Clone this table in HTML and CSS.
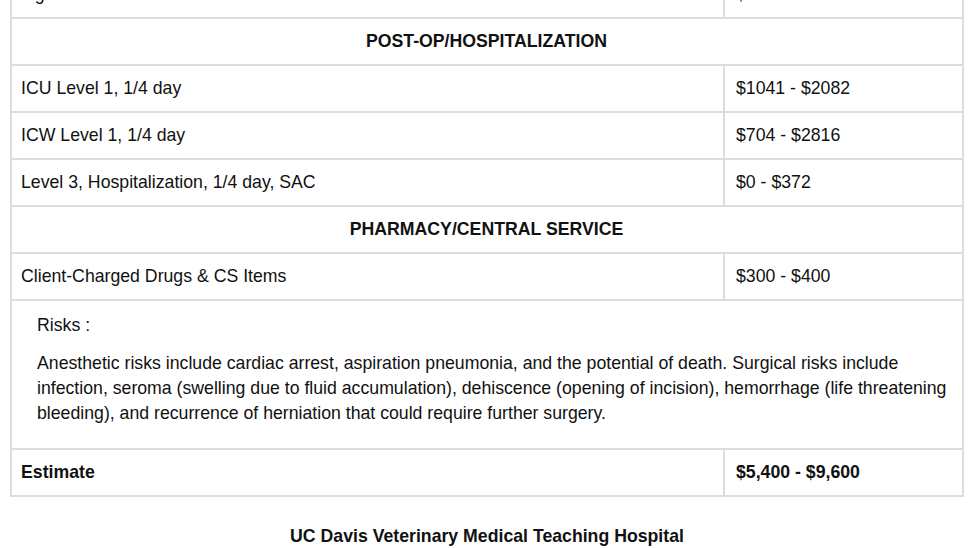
FILE: index.html
```html
<!DOCTYPE html>
<html>
<head>
<meta charset="utf-8">
<link rel="stylesheet" href="styles.css">
</head>
<body>
<div class="page">
  <table class="estimate">
    <tbody>
      <tr><td class="item">Ligature Fee</td><td class="price">$267</td></tr>
      <tr><td class="section" colspan="2">POST-OP/HOSPITALIZATION</td></tr>
      <tr><td class="item">ICU Level 1, 1/4 day</td><td class="price">$1041 - $2082</td></tr>
      <tr><td class="item">ICW Level 1, 1/4 day</td><td class="price">$704 - $2816</td></tr>
      <tr><td class="item">Level 3, Hospitalization, 1/4 day, SAC</td><td class="price">$0 - $372</td></tr>
      <tr><td class="section" colspan="2">PHARMACY/CENTRAL SERVICE</td></tr>
      <tr><td class="item">Client-Charged Drugs &amp; CS Items</td><td class="price">$300 - $400</td></tr>
      <tr>
        <td class="risks" colspan="2">
          <div class="risks-inner">
            <div class="risks-label">Risks :</div>
            <p class="risks-text">Anesthetic risks include cardiac arrest, aspiration pneumonia, and the potential of death. Surgical risks include infection, seroma (swelling due to fluid accumulation), dehiscence (opening of incision), hemorrhage (life threatening bleeding), and recurrence of herniation that could require further surgery.</p>
          </div>
        </td>
      </tr>
      <tr class="total"><td class="item">Estimate</td><td class="price">$5,400 - $9,600</td></tr>
    </tbody>
  </table>
  <div class="footer">UC Davis Veterinary Medical Teaching Hospital</div>
</div>
</body>
</html>
```

FILE: styles.css
```css
html, body {
  margin: 0;
  padding: 0;
  background: #ffffff;
}
body {
  font-family: "Liberation Sans", Arial, sans-serif;
  font-size: 17.7px;
  color: #111111;
  overflow: hidden;
}
.page {
  padding-left: 10px;
  margin-top: -30px;
}
.estimate {
  width: 954px;
  box-sizing: border-box;
  table-layout: fixed;
  border-collapse: separate;
  border-spacing: 0;
  border-top: 2px solid #dddddd;
  border-left: 2px solid #dddddd;
}
.estimate td {
  border-right: 2px solid #dddddd;
  border-bottom: 2px solid #dddddd;
  padding: 12px 10px 12px 9px;
  line-height: 21px;
  height: 47px;
  vertical-align: middle;
  box-sizing: border-box;
}
.estimate td.item {
  width: 713px;
}
.estimate td.price {
  padding-left: 11px;
}
.estimate td.section {
  text-align: center;
  font-weight: bold;
}
.total td {
  font-weight: bold;
}
.risks-inner {
  padding-left: 16px;
}
.risks-label {
  line-height: 21px;
  padding-top: 2px;
}
.risks-text {
  margin: 15px 0 10px;
  line-height: 25px;
}
.footer {
  width: 954px;
  text-align: center;
  font-weight: bold;
  margin-top: 29px;
}
```
